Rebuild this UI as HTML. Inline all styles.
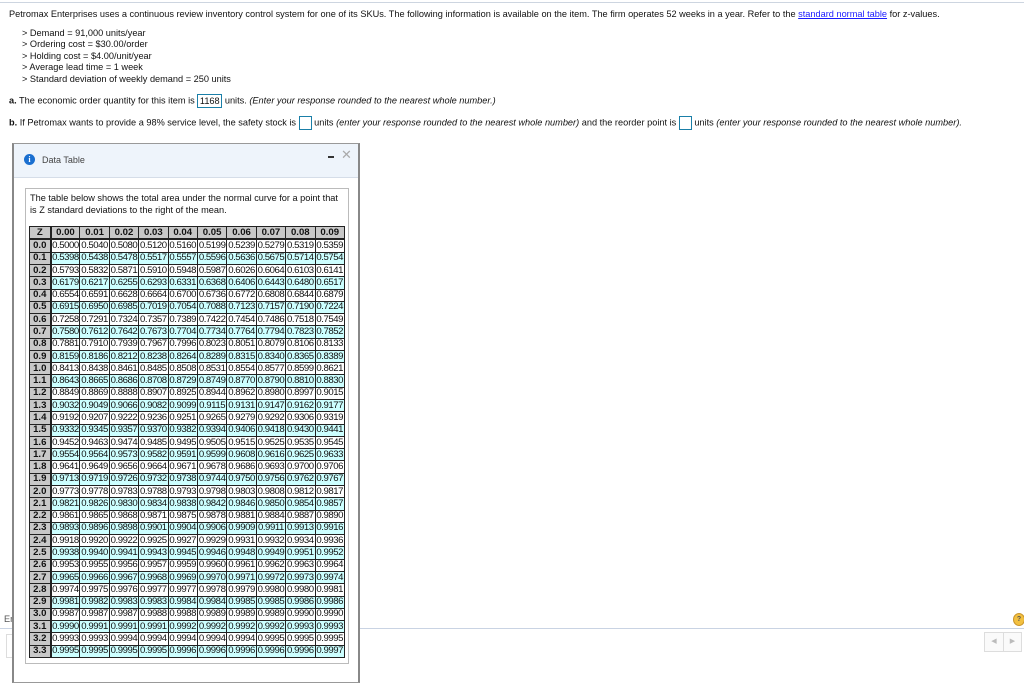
<!DOCTYPE html>
<html><head><meta charset="utf-8"><style>
body{margin:0;width:1024px;height:673px;overflow:hidden;background:#fff;font-family:"Liberation Sans",Arial,sans-serif;font-size:9.2px;color:#111;position:relative}
.a{position:absolute;white-space:nowrap}
.box{display:inline-block;border:1px solid #1a7fa8;height:14px;vertical-align:middle;box-sizing:border-box}
i{font-style:italic}
#modal{position:absolute;left:12px;top:143px;width:348px;height:540px;background:#fff;border:1px solid #999;border-right:2px solid #888;border-left:2px solid #888;box-sizing:border-box}
#mh{height:33px;background:#eef4fb;border-bottom:1px solid #d5dde8}
#inner{position:absolute;left:11px;top:44px;width:324px;height:476px;border:1px solid #bbb;box-sizing:border-box}
table{position:absolute;left:3px;top:37px;width:316px;height:432px;border-collapse:collapse;table-layout:fixed;font-size:9.6px}
td{border:1px solid #222;padding:0;text-align:center;line-height:10px;overflow:hidden;white-space:nowrap;letter-spacing:-0.45px}
tr:nth-child(odd) td{background:#ccffff}
tr:first-child td{background:#c8c8c8;font-weight:bold;border-bottom:2px solid #222;letter-spacing:0}
td:first-child{background:#c8c8c8!important;font-weight:bold;border-right:2px solid #222;letter-spacing:0}
</style></head><body>
<div class="a" style="left:0;top:2px;width:1024px;height:1px;background:#cdd5e0"></div>
<div class="a" style="left:9px;top:9px">Petromax Enterprises uses a continuous review inventory control system for one of its SKUs. The following information is available on the item. The firm operates 52 weeks in a year. Refer to the <span style="color:#1a1aff;text-decoration:underline">standard normal table</span> for z-values.</div>
<div class="a" style="left:22px;top:28px;line-height:11.4px">&gt; Demand = 91,000 units/year<br>&gt; Ordering cost = $30.00/order<br>&gt; Holding cost = $4.00/unit/year<br>&gt; Average lead time = 1 week<br>&gt; Standard deviation of weekly demand = 250 units</div>
<div class="a" style="left:9px;top:94px"><b>a.</b> The economic order quantity for this item is <span class="box" style="width:25px;text-align:center;line-height:12px">1168</span> units. <i>(Enter your response rounded to the nearest whole number.)</i></div>
<div class="a" style="left:9px;top:116px"><b>b.</b> If Petromax wants to provide a 98% service level, the safety stock is <span class="box" style="width:13px"></span> units <i>(enter your response rounded to the nearest whole number)</i> and the reorder point is <span class="box" style="width:13px"></span> units <i>(enter your response rounded to the nearest whole number).</i></div>
<div class="a" style="left:360px;top:628px;width:664px;height:1px;background:#c9d3e3"></div>
<div class="a" style="left:4px;top:614px;color:#555">Er</div>
<div class="a" style="left:0;top:628px;width:12px;height:1px;background:#c9d3e3"></div>
<div class="a" style="left:6px;top:634px;width:6px;height:22px;border:1px solid #ddd;border-right:none"></div>
<div class="a" style="left:1013px;top:613px;width:10px;height:11px;border-radius:50%;background:#f2c040;border:1px solid #c9942a;font-size:7px;text-align:center;line-height:11px;font-weight:bold;color:#555">?</div>
<div class="a" style="left:984px;top:632px;width:36px;height:18px;border:1px solid #ddd;background:#fafafa;font-size:7px;color:#bbb;line-height:18px"><span style="display:inline-block;width:18px;text-align:center;border-right:1px solid #ddd">◀</span><span style="display:inline-block;width:17px;text-align:center">▶</span></div>
<div id="modal"><div id="mh">
<div class="a" style="left:10px;top:10px;width:11px;height:11px;border-radius:50%;background:#1a6fd0;color:#fff;font-size:8px;font-weight:bold;text-align:center;line-height:11px;font-family:'Liberation Serif',serif">i</div>
<div class="a" style="left:28px;top:11px;font-size:9px;color:#444">Data Table</div>
<div class="a" style="left:314px;top:12px;width:6px;height:2px;background:#333"></div>
<div class="a" style="left:327px;top:3px;font-size:13px;color:#aaa">✕</div>
</div>
<div id="inner">
<div class="a" style="left:4px;top:4px;line-height:11.5px;font-size:9.2px">The table below shows the total area under the normal curve for a point that<br>is Z standard deviations to the right of the mean.</div>
<table>
<colgroup><col style="width:21px"><col span="10"></colgroup>
<tr><td>Z</td><td>0.00</td><td>0.01</td><td>0.02</td><td>0.03</td><td>0.04</td><td>0.05</td><td>0.06</td><td>0.07</td><td>0.08</td><td>0.09</td></tr>
<tr><td>0.0</td><td>0.5000</td><td>0.5040</td><td>0.5080</td><td>0.5120</td><td>0.5160</td><td>0.5199</td><td>0.5239</td><td>0.5279</td><td>0.5319</td><td>0.5359</td></tr>
<tr><td>0.1</td><td>0.5398</td><td>0.5438</td><td>0.5478</td><td>0.5517</td><td>0.5557</td><td>0.5596</td><td>0.5636</td><td>0.5675</td><td>0.5714</td><td>0.5754</td></tr>
<tr><td>0.2</td><td>0.5793</td><td>0.5832</td><td>0.5871</td><td>0.5910</td><td>0.5948</td><td>0.5987</td><td>0.6026</td><td>0.6064</td><td>0.6103</td><td>0.6141</td></tr>
<tr><td>0.3</td><td>0.6179</td><td>0.6217</td><td>0.6255</td><td>0.6293</td><td>0.6331</td><td>0.6368</td><td>0.6406</td><td>0.6443</td><td>0.6480</td><td>0.6517</td></tr>
<tr><td>0.4</td><td>0.6554</td><td>0.6591</td><td>0.6628</td><td>0.6664</td><td>0.6700</td><td>0.6736</td><td>0.6772</td><td>0.6808</td><td>0.6844</td><td>0.6879</td></tr>
<tr><td>0.5</td><td>0.6915</td><td>0.6950</td><td>0.6985</td><td>0.7019</td><td>0.7054</td><td>0.7088</td><td>0.7123</td><td>0.7157</td><td>0.7190</td><td>0.7224</td></tr>
<tr><td>0.6</td><td>0.7258</td><td>0.7291</td><td>0.7324</td><td>0.7357</td><td>0.7389</td><td>0.7422</td><td>0.7454</td><td>0.7486</td><td>0.7518</td><td>0.7549</td></tr>
<tr><td>0.7</td><td>0.7580</td><td>0.7612</td><td>0.7642</td><td>0.7673</td><td>0.7704</td><td>0.7734</td><td>0.7764</td><td>0.7794</td><td>0.7823</td><td>0.7852</td></tr>
<tr><td>0.8</td><td>0.7881</td><td>0.7910</td><td>0.7939</td><td>0.7967</td><td>0.7996</td><td>0.8023</td><td>0.8051</td><td>0.8079</td><td>0.8106</td><td>0.8133</td></tr>
<tr><td>0.9</td><td>0.8159</td><td>0.8186</td><td>0.8212</td><td>0.8238</td><td>0.8264</td><td>0.8289</td><td>0.8315</td><td>0.8340</td><td>0.8365</td><td>0.8389</td></tr>
<tr><td>1.0</td><td>0.8413</td><td>0.8438</td><td>0.8461</td><td>0.8485</td><td>0.8508</td><td>0.8531</td><td>0.8554</td><td>0.8577</td><td>0.8599</td><td>0.8621</td></tr>
<tr><td>1.1</td><td>0.8643</td><td>0.8665</td><td>0.8686</td><td>0.8708</td><td>0.8729</td><td>0.8749</td><td>0.8770</td><td>0.8790</td><td>0.8810</td><td>0.8830</td></tr>
<tr><td>1.2</td><td>0.8849</td><td>0.8869</td><td>0.8888</td><td>0.8907</td><td>0.8925</td><td>0.8944</td><td>0.8962</td><td>0.8980</td><td>0.8997</td><td>0.9015</td></tr>
<tr><td>1.3</td><td>0.9032</td><td>0.9049</td><td>0.9066</td><td>0.9082</td><td>0.9099</td><td>0.9115</td><td>0.9131</td><td>0.9147</td><td>0.9162</td><td>0.9177</td></tr>
<tr><td>1.4</td><td>0.9192</td><td>0.9207</td><td>0.9222</td><td>0.9236</td><td>0.9251</td><td>0.9265</td><td>0.9279</td><td>0.9292</td><td>0.9306</td><td>0.9319</td></tr>
<tr><td>1.5</td><td>0.9332</td><td>0.9345</td><td>0.9357</td><td>0.9370</td><td>0.9382</td><td>0.9394</td><td>0.9406</td><td>0.9418</td><td>0.9430</td><td>0.9441</td></tr>
<tr><td>1.6</td><td>0.9452</td><td>0.9463</td><td>0.9474</td><td>0.9485</td><td>0.9495</td><td>0.9505</td><td>0.9515</td><td>0.9525</td><td>0.9535</td><td>0.9545</td></tr>
<tr><td>1.7</td><td>0.9554</td><td>0.9564</td><td>0.9573</td><td>0.9582</td><td>0.9591</td><td>0.9599</td><td>0.9608</td><td>0.9616</td><td>0.9625</td><td>0.9633</td></tr>
<tr><td>1.8</td><td>0.9641</td><td>0.9649</td><td>0.9656</td><td>0.9664</td><td>0.9671</td><td>0.9678</td><td>0.9686</td><td>0.9693</td><td>0.9700</td><td>0.9706</td></tr>
<tr><td>1.9</td><td>0.9713</td><td>0.9719</td><td>0.9726</td><td>0.9732</td><td>0.9738</td><td>0.9744</td><td>0.9750</td><td>0.9756</td><td>0.9762</td><td>0.9767</td></tr>
<tr><td>2.0</td><td>0.9773</td><td>0.9778</td><td>0.9783</td><td>0.9788</td><td>0.9793</td><td>0.9798</td><td>0.9803</td><td>0.9808</td><td>0.9812</td><td>0.9817</td></tr>
<tr><td>2.1</td><td>0.9821</td><td>0.9826</td><td>0.9830</td><td>0.9834</td><td>0.9838</td><td>0.9842</td><td>0.9846</td><td>0.9850</td><td>0.9854</td><td>0.9857</td></tr>
<tr><td>2.2</td><td>0.9861</td><td>0.9865</td><td>0.9868</td><td>0.9871</td><td>0.9875</td><td>0.9878</td><td>0.9881</td><td>0.9884</td><td>0.9887</td><td>0.9890</td></tr>
<tr><td>2.3</td><td>0.9893</td><td>0.9896</td><td>0.9898</td><td>0.9901</td><td>0.9904</td><td>0.9906</td><td>0.9909</td><td>0.9911</td><td>0.9913</td><td>0.9916</td></tr>
<tr><td>2.4</td><td>0.9918</td><td>0.9920</td><td>0.9922</td><td>0.9925</td><td>0.9927</td><td>0.9929</td><td>0.9931</td><td>0.9932</td><td>0.9934</td><td>0.9936</td></tr>
<tr><td>2.5</td><td>0.9938</td><td>0.9940</td><td>0.9941</td><td>0.9943</td><td>0.9945</td><td>0.9946</td><td>0.9948</td><td>0.9949</td><td>0.9951</td><td>0.9952</td></tr>
<tr><td>2.6</td><td>0.9953</td><td>0.9955</td><td>0.9956</td><td>0.9957</td><td>0.9959</td><td>0.9960</td><td>0.9961</td><td>0.9962</td><td>0.9963</td><td>0.9964</td></tr>
<tr><td>2.7</td><td>0.9965</td><td>0.9966</td><td>0.9967</td><td>0.9968</td><td>0.9969</td><td>0.9970</td><td>0.9971</td><td>0.9972</td><td>0.9973</td><td>0.9974</td></tr>
<tr><td>2.8</td><td>0.9974</td><td>0.9975</td><td>0.9976</td><td>0.9977</td><td>0.9977</td><td>0.9978</td><td>0.9979</td><td>0.9980</td><td>0.9980</td><td>0.9981</td></tr>
<tr><td>2.9</td><td>0.9981</td><td>0.9982</td><td>0.9983</td><td>0.9983</td><td>0.9984</td><td>0.9984</td><td>0.9985</td><td>0.9985</td><td>0.9986</td><td>0.9986</td></tr>
<tr><td>3.0</td><td>0.9987</td><td>0.9987</td><td>0.9987</td><td>0.9988</td><td>0.9988</td><td>0.9989</td><td>0.9989</td><td>0.9989</td><td>0.9990</td><td>0.9990</td></tr>
<tr><td>3.1</td><td>0.9990</td><td>0.9991</td><td>0.9991</td><td>0.9991</td><td>0.9992</td><td>0.9992</td><td>0.9992</td><td>0.9992</td><td>0.9993</td><td>0.9993</td></tr>
<tr><td>3.2</td><td>0.9993</td><td>0.9993</td><td>0.9994</td><td>0.9994</td><td>0.9994</td><td>0.9994</td><td>0.9994</td><td>0.9995</td><td>0.9995</td><td>0.9995</td></tr>
<tr><td>3.3</td><td>0.9995</td><td>0.9995</td><td>0.9995</td><td>0.9995</td><td>0.9996</td><td>0.9996</td><td>0.9996</td><td>0.9996</td><td>0.9996</td><td>0.9997</td></tr>
</table>
</div></div>
</body></html>
